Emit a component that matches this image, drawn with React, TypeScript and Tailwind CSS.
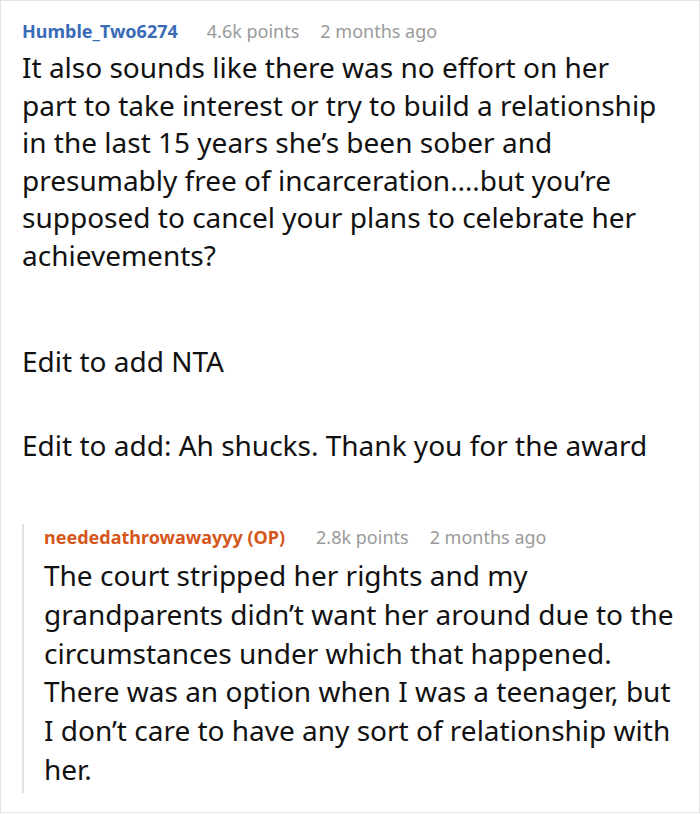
export default function App() {
  return (
    <div className="w-[700px] h-[814px] bg-white" style={{ fontFamily: '"Noto Sans", "Open Sans", sans-serif' }}>
      <div className="h-[813px] border border-[#e4e4e4] pl-[21px] pr-4 pt-[17px]">
        <div className="flex items-center gap-[29px] text-[18px] leading-[26px]">
          <span className="font-bold text-[#3a6bb7]">Humble_Two6274</span>
          <span className="text-[#9a9a9a]">4.6k points</span>
          <span className="-ml-2 text-[#9a9a9a]">2 months ago</span>
        </div>
        <div className="mt-[5px] text-[28px] leading-[37.5px] text-[#111]">
          <p className="w-[645px]">
            It also sounds like there was no effort on her part to take interest or try to build a relationship in the last 15 years she’s been sober and presumably free of incarceration….but you’re supposed to cancel your plans to celebrate her achievements?
          </p>
          <p className="mt-[69px]">Edit to add NTA</p>
          <p className="mt-[46px]">Edit to add: Ah shucks. Thank you for the award</p>
        </div>
        <div className="mt-[60px] border-l-2 border-[#e2e2e2] pl-[20px] pb-1">
          <div className="flex items-center gap-[29px] text-[18px] leading-[26px]">
            <span className="font-bold text-[#d4561b]">neededathrowawayyy (OP)</span>
            <span className="ml-[2px] text-[#9a9a9a]">2.8k points</span>
            <span className="-ml-2 text-[#9a9a9a]">2 months ago</span>
          </div>
          <p className="mt-[6px] text-[28px] leading-[38.8px] text-[#111]">
            The court stripped her rights and my grandparents didn’t want her around due to the circumstances under which that happened. There was an option when I was a teenager, but I don’t care to have any sort of relationship with her.
          </p>
        </div>
      </div>
    </div>
  )
}
